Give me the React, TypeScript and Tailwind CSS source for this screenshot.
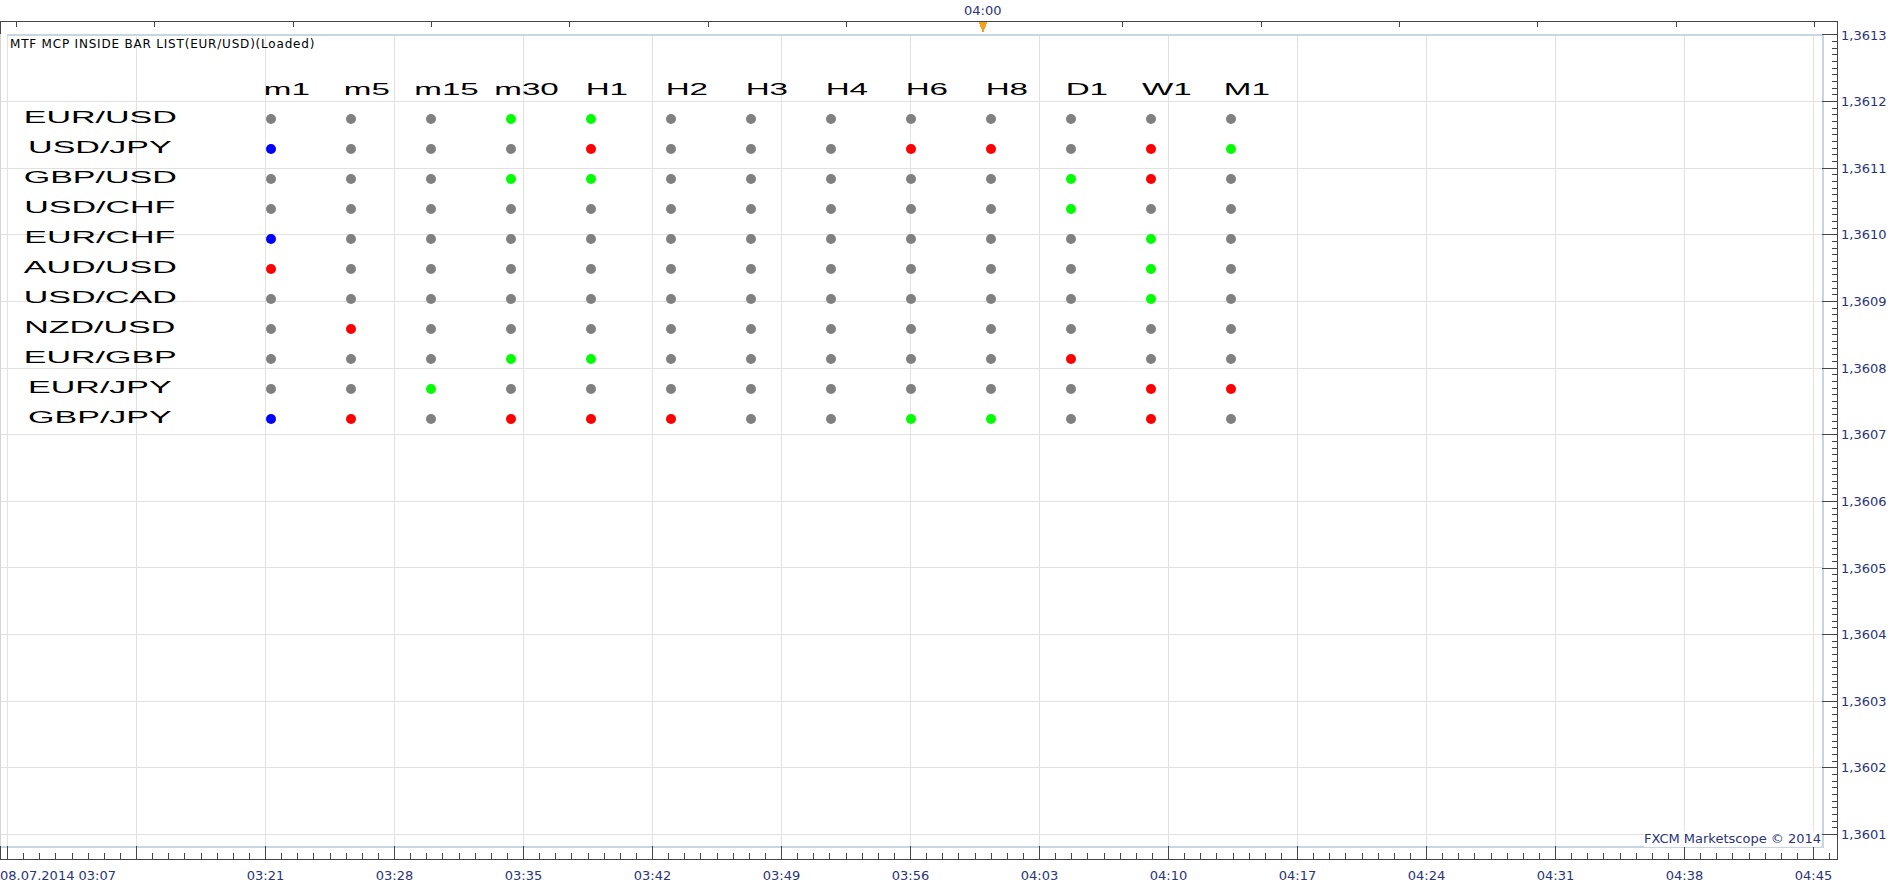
const PAIRS = ['EUR/USD', 'USD/JPY', 'GBP/USD', 'USD/CHF', 'EUR/CHF', 'AUD/USD', 'USD/CAD', 'NZD/USD', 'EUR/GBP', 'EUR/JPY', 'GBP/JPY'];
const FRAMES = ['m1', 'm5', 'm15', 'm30', 'H1', 'H2', 'H3', 'H4', 'H6', 'H8', 'D1', 'W1', 'M1'];

// one letter per timeframe: g = none, G = up, R = down, B = both
const SIGNALS = [
  'gggGGgggggggg',
  'BgggRgggRRgRG',
  'gggGGgggggGRg',
  'ggggggggggGgg',
  'BggggggggggGg',
  'RggggggggggGg',
  'gggggggggggGg',
  'gRggggggggggg',
  'gggGGgggggRgg',
  'ggGggggggggRR',
  'BRgRRRggGGgRg',
];

const DOT: Record<string, string> = {
  g: 'bg-[#808080]',
  G: 'bg-[#00ff00]',
  R: 'bg-[#ff0000]',
  B: 'bg-[#0000ff]',
};

const PRICES = ['1,3613', '1,3612', '1,3611', '1,3610', '1,3609', '1,3608', '1,3607', '1,3606', '1,3605', '1,3604', '1,3603', '1,3602', '1,3601'];
const TIMES = ['03:21', '03:28', '03:35', '03:42', '03:49', '03:56', '04:03', '04:10', '04:17', '04:24', '04:31', '04:38', '04:45'];

const AXIS = '#454545';
const GRID = '#e1e1e1';
const FRAME = '#c8d5e2';

function ChartGrid() {
  const vLines = Array.from({ length: 15 }, (_, k) => 7 + 129 * k);
  const hLines = Array.from({ length: 12 }, (_, k) => 79 + 66.64 * k);
  const topTicks = Array.from({ length: 14 }, (_, k) => Math.round(16 + 138.3 * k));
  const minorX = Array.from({ length: 114 }, (_, j) => Math.round(7 + 16.125 * j));
  const majorY = Array.from({ length: 13 }, (_, k) => Math.round(12.4 + 66.64 * k));
  const minorY = Array.from({ length: 121 }, (_, j) => Math.round(12.4 + 6.664 * j));

  return (
    <svg className="absolute inset-0" width="1837" height="837" shapeRendering="crispEdges">
      {/* grid */}
      {hLines.map((y) => (
        <line key={y} x1="0" x2="1822" y1={Math.round(y) + 0.5} y2={Math.round(y) + 0.5} stroke={GRID} />
      ))}
      {vLines.map((x) => (
        <line key={x} x1={x + 0.5} x2={x + 0.5} y1="12" y2="824" stroke={GRID} />
      ))}
      <line x1="0.5" x2="0.5" y1="12" y2="824" stroke="#d6d6d6" />

      {/* plot frame */}
      <rect x="7" y="12" width="1816" height="2" fill={FRAME} />
      <rect x="1822" y="12" width="2" height="813" fill={FRAME} />
      <rect x="0" y="824" width="1824" height="2" fill={FRAME} />

      {/* top axis */}
      {topTicks.map((x) => (
        <line key={x} x1={x + 0.5} x2={x + 0.5} y1="0" y2="5" stroke={AXIS} />
      ))}
      <line x1="0.5" x2="0.5" y1="0" y2="12" stroke={AXIS} />
      <polygon points="978.5,0 987.5,0 983,11" fill="#f7a01e" />

      {/* bottom axis */}
      <line x1="0.5" x2="0.5" y1="824" y2="837" stroke={AXIS} />
      {vLines.map((x) => (
        <line key={x} x1={x + 0.5} x2={x + 0.5} y1="824" y2="837" stroke={AXIS} />
      ))}
      {minorX.map((x) => (
        <line key={x} x1={x + 0.5} x2={x + 0.5} y1="831" y2="837" stroke={AXIS} />
      ))}

      {/* right axis */}
      {minorY.map((y) => (
        <line key={y} x1="1832" x2="1837" y1={y + 0.5} y2={y + 0.5} stroke={AXIS} />
      ))}
      {majorY.map((y) => (
        <line key={y} x1="1822" x2="1837" y1={y + 0.5} y2={y + 0.5} stroke={AXIS} />
      ))}
    </svg>
  );
}

function IndicatorTable() {
  return (
    <div className="mt-[22px] font-['Liberation_Sans',Arial,sans-serif] text-[17px] text-black">
      <div className="flex h-[30px] leading-[31px]">
        <div className="w-[247px]" />
        {FRAMES.map((f) => (
          <div key={f} className="w-[80px] text-center">
            <span className="inline-block scale-x-[1.95]">{f}</span>
          </div>
        ))}
      </div>
      {PAIRS.map((pair, i) => (
        <div key={pair} className="flex h-[30px] items-center">
          <div className="w-[247px] self-start pr-[47px] text-center leading-[28px]">
            <span className="inline-block scale-x-[2]">{pair}</span>
          </div>
          {SIGNALS[i].split('').map((s, j) => (
            <div key={j} className="w-[80px]">
              <div className={`ml-[19px] size-[10px] rounded-full ${DOT[s]}`} />
            </div>
          ))}
        </div>
      ))}
    </div>
  );
}

export default function App() {
  return (
    <div className="flex h-[889px] w-[1903px] flex-col overflow-hidden bg-white font-['DejaVu_Sans',Verdana,sans-serif] text-[13px] text-[#2a3478]">
      <div className="h-[21px] pl-[964px] leading-[21px]">04:00</div>

      <div className="flex">
        <div className="relative h-[839px] w-[1838px] border-t border-r border-b border-[#454545]">
          <ChartGrid />
          <div className="relative flex h-full flex-col pt-[14px]">
            <div className="pl-[10px] text-[12px] leading-[16px] tracking-[0.8px] text-black">
              MTF MCP INSIDE BAR LIST(EUR/USD)(Loaded)
            </div>
            <IndicatorTable />
            <div className="mt-auto mr-[16px] mb-[12px] self-end bg-white leading-[16px]">
              FXCM Marketscope © 2014
            </div>
          </div>
        </div>

        {/* price scale */}
        <div className="flex flex-col gap-[50.64px] pt-[6.5px] pl-[3px] leading-[16px]">
          {PRICES.map((p) => (
            <div key={p}>{p}</div>
          ))}
        </div>
      </div>

      {/* time scale */}
      <div className="flex pt-[8px] leading-[16px]">
        <div className="w-[201px]">08.07.2014 03:07</div>
        {TIMES.map((t) => (
          <div key={t} className="w-[129px] text-center">
            {t}
          </div>
        ))}
      </div>
    </div>
  );
}
